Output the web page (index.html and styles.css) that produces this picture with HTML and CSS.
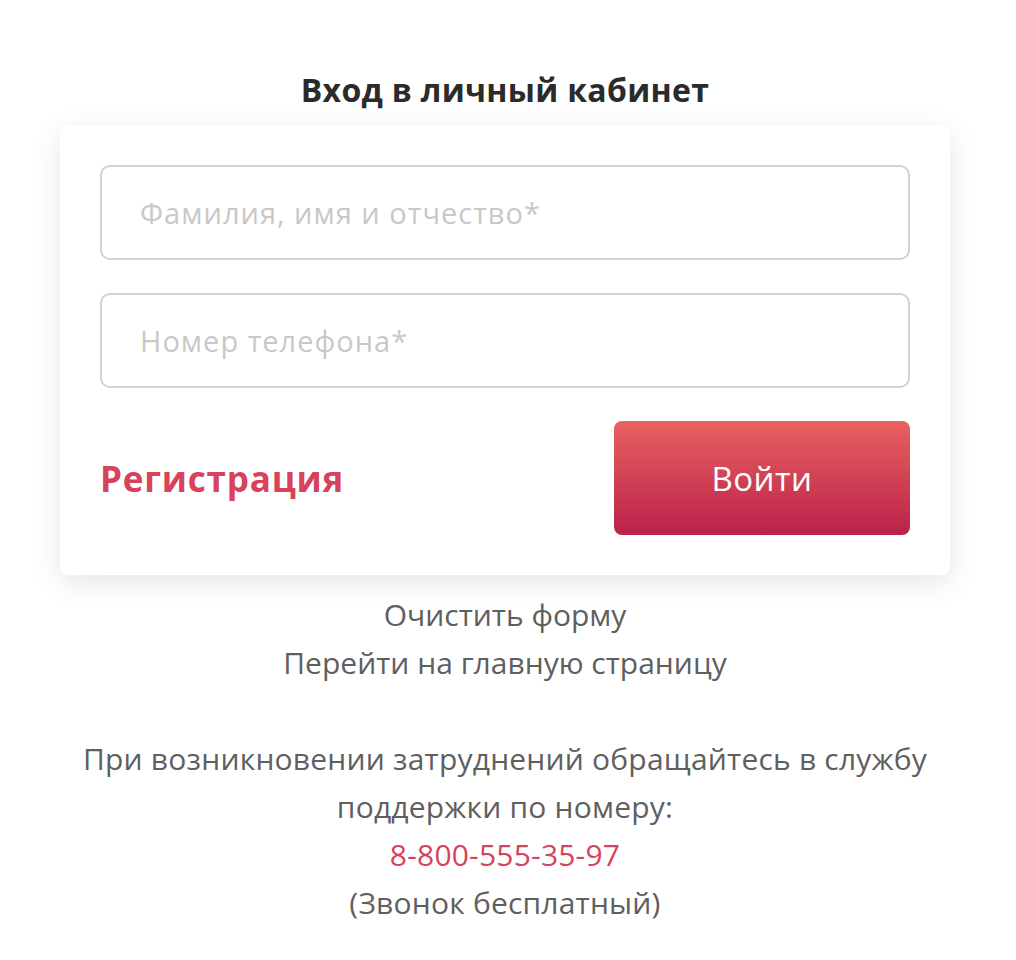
FILE: index.html
```html
<!DOCTYPE html>
<html lang="ru">
<head>
<meta charset="utf-8">
<link rel="stylesheet" href="styles.css">
<title>Вход в личный кабинет</title>
</head>
<body>
<main class="page">
  <h1 class="title">Вход в личный кабинет</h1>
  <form class="card">
    <input class="field" type="text" placeholder="Фамилия, имя и отчество*">
    <input class="field" type="tel" placeholder="Номер телефона*">
    <div class="actions">
      <a class="register" href="#">Регистрация</a>
      <button class="submit" type="button">Войти</button>
    </div>
  </form>
  <nav class="links">
    <a href="#">Очистить форму</a>
    <a href="#">Перейти на главную страницу</a>
  </nav>
  <p class="help">При возникновении затруднений обращайтесь в службу поддержки по номеру:<br><a class="phone" href="#">8-800-555-35-97</a><br>(Звонок бесплатный)</p>
</main>
</body>
</html>
```
FILE: styles.css
```css
html, body {
  margin: 0;
  padding: 0;
  background: #ffffff;
}
body {
  font-family: "Open Sans", "Noto Sans", sans-serif;
  color: #5f5f5f;
}
.page {
  width: 890px;
  margin-left: 60px;
  padding-top: 70px;
  display: flex;
  flex-direction: column;
  align-items: stretch;
}
.title {
  margin: 0 0 15px;
  text-align: center;
  font-size: 32px;
  line-height: 40px;
  font-weight: 700;
  color: #2b2b2b;
  letter-spacing: 0.3px;
}
.card {
  background: #fff;
  border-radius: 8px;
  box-shadow: 0 8px 30px rgba(0, 0, 0, 0.10);
  padding: 40px;
  display: flex;
  flex-direction: column;
  gap: 33px;
}
.field {
  box-sizing: border-box;
  height: 95px;
  width: 100%;
  border: 2px solid #d2d2d2;
  border-radius: 10px;
  padding: 0 38px;
  font-family: inherit;
  font-size: 29px;
  letter-spacing: 1px;
  color: #333;
  outline: none;
}
.field::placeholder {
  color: #c8c8c8;
}
.actions {
  display: flex;
  justify-content: space-between;
  align-items: center;
}
.register {
  font-size: 35px;
  font-weight: 700;
  letter-spacing: 0.8px;
  color: #d6435a;
  text-decoration: none;
}
.submit {
  width: 296px;
  height: 114px;
  border: none;
  border-radius: 8px;
  background: linear-gradient(180deg, #e8625f 0%, #ba2249 100%);
  color: #fff;
  font-family: inherit;
  font-size: 33px;
  font-weight: 500;
  letter-spacing: 0.5px;
}
.links {
  margin-top: 16px;
  display: flex;
  flex-direction: column;
  align-items: center;
}
.links a {
  font-size: 30px;
  line-height: 48px;
  color: #5f5f5f;
  text-decoration: none;
}
.help {
  margin: 48px 0 0;
  text-align: center;
  font-size: 30px;
  line-height: 48px;
  letter-spacing: 0.2px;
}
.phone {
  color: #d6435a;
  text-decoration: none;
}
```
